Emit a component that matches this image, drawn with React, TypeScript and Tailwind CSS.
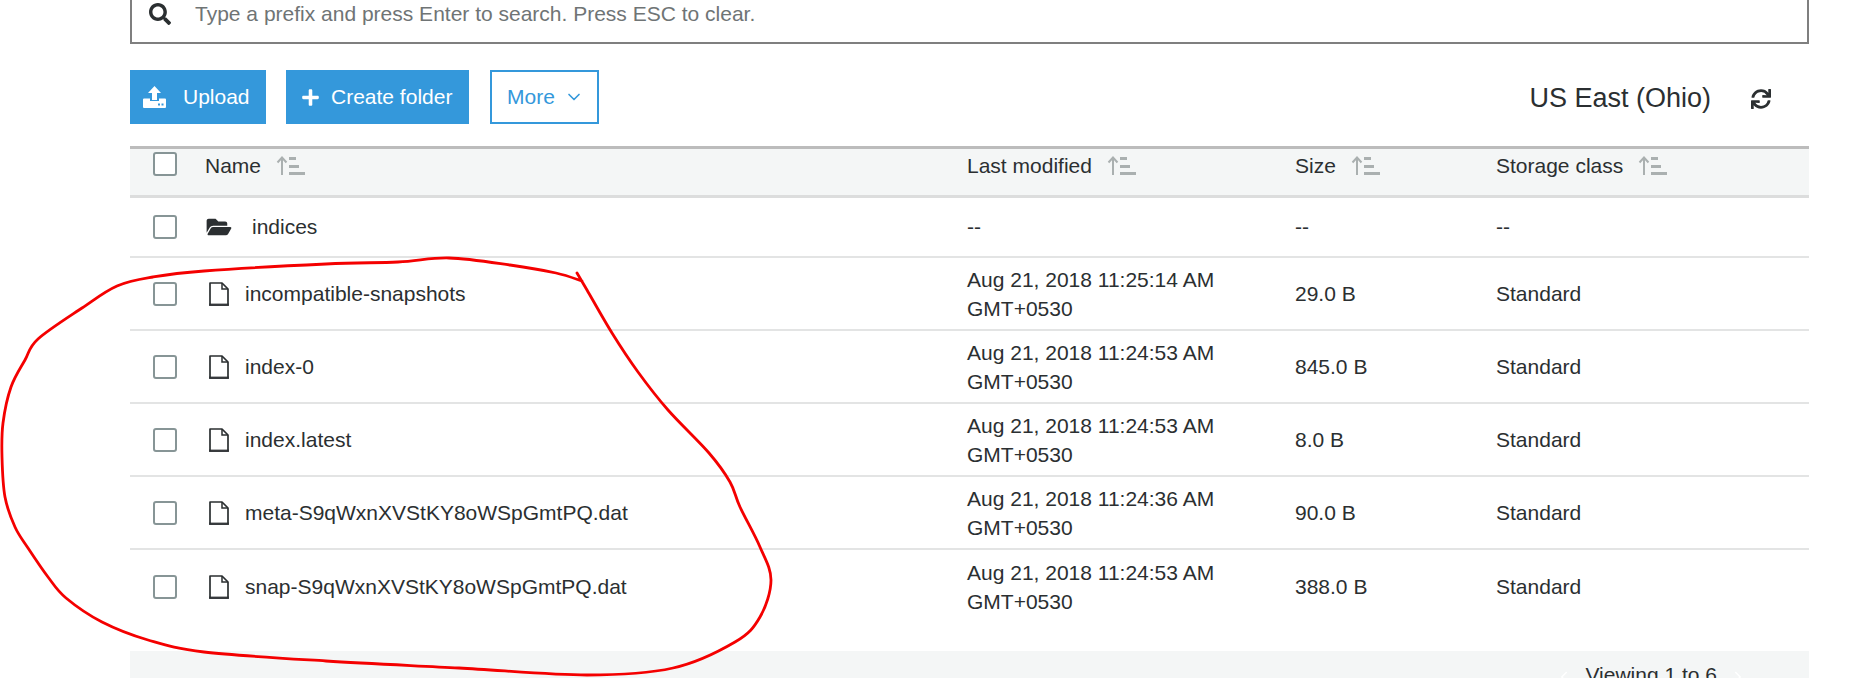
import { ChevronDown, ChevronLeft, ChevronRight } from 'lucide-react';
import { FaFolderOpen, FaPlus, FaSearch, FaSync } from 'react-icons/fa';

const rows = [
  { name: 'incompatible-snapshots', date: 'Aug 21, 2018 11:25:14 AM', size: '29.0 B' },
  { name: 'index-0', date: 'Aug 21, 2018 11:24:53 AM', size: '845.0 B' },
  { name: 'index.latest', date: 'Aug 21, 2018 11:24:53 AM', size: '8.0 B' },
  { name: 'meta-S9qWxnXVStKY8oWSpGmtPQ.dat', date: 'Aug 21, 2018 11:24:36 AM', size: '90.0 B' },
  { name: 'snap-S9qWxnXVStKY8oWSpGmtPQ.dat', date: 'Aug 21, 2018 11:24:53 AM', size: '388.0 B' },
];

// the hand-drawn circle, traced from the screenshot
const scribble: [number, number][] = [
  [582, 281], [556, 273], [510, 265], [449, 258], [398, 262], [326, 264], [204, 271], [153, 277], [117, 286],
  [82, 308], [38, 339], [25, 360], [11, 387], [3, 423], [2, 457], [5, 497], [15, 527], [28, 548], [48, 577],
  [66, 598], [102, 622], [148, 640], [204, 652], [326, 661], [459, 668], [587, 675], [673, 668], [735, 642],
  [760, 617], [771, 580], [760, 547], [740, 507], [730, 482], [709, 453], [668, 410], [638, 372], [612, 333],
  [587, 290], [577, 273],
];

const smoothPath = (pts: [number, number][]) => {
  let d = `M${pts[0][0]} ${pts[0][1]}`;
  for (let i = 0; i < pts.length - 1; i++) {
    const p0 = pts[Math.max(i - 1, 0)];
    const p1 = pts[i];
    const p2 = pts[i + 1];
    const p3 = pts[Math.min(i + 2, pts.length - 1)];
    const c1x = p1[0] + (p2[0] - p0[0]) / 6;
    const c1y = p1[1] + (p2[1] - p0[1]) / 6;
    const c2x = p2[0] - (p3[0] - p1[0]) / 6;
    const c2y = p2[1] - (p3[1] - p1[1]) / 6;
    d += ` C${c1x} ${c1y} ${c2x} ${c2y} ${p2[0]} ${p2[1]}`;
  }
  return d;
};

const Checkbox = () => <div className="w-6 h-6 ml-[23px] bg-white border-2 border-[#879596] rounded-[3px]" />;

const SortIcon = () => (
  <svg width="30" height="20" viewBox="0 0 30 20" className="text-[#aab0b0] shrink-0">
    <path d="M6 19V2M1.5 6.5 6 1.5l4.5 5" fill="none" stroke="currentColor" strokeWidth="2" />
    <path d="M13 1h7v3h-7zM13 9h10v3H13zM13 16h16v3H13z" fill="currentColor" />
  </svg>
);

const UploadIcon = () => (
  <svg width="23" height="22" viewBox="0 0 23 22" fill="white" className="shrink-0">
    <path d="M11.5 0 18 7h-4v7H9V7H5z" />
    <path d="M1 12.5h6V15h9v-2.5h6a1 1 0 0 1 1 1V21a1 1 0 0 1-1 1H1a1 1 0 0 1-1-1v-7.5a1 1 0 0 1 1-1z" />
    <rect x="15" y="17.5" width="2" height="2" fill="#3498db" />
    <rect x="18.5" y="17.5" width="2" height="2" fill="#3498db" />
  </svg>
);

const FileIcon = () => (
  <svg width="20" height="24" viewBox="0 0 20 24" className="ml-[4px] shrink-0 text-[#2b2f31]">
    <path d="M1 1h12l6 6v16H1z" fill="none" stroke="currentColor" strokeWidth="1.7" strokeLinejoin="round" />
    <path d="M13 1v6h6" fill="none" stroke="currentColor" strokeWidth="1.5" />
    <path d="M0 21.5h20V24H0z" fill="currentColor" opacity="0.75" />
  </svg>
);

const Head = ({ label }: { label: string }) => (
  <div className="flex items-center gap-[15px] h-[28px]">
    <span>{label}</span>
    <SortIcon />
  </div>
);

export default function App() {
  return (
    <div className="relative w-[1872px] h-[678px] overflow-hidden bg-white pl-[130px] pr-[63px] text-[21px] text-[#2b2f31] font-['Liberation_Sans',Arial,sans-serif]">
      <div className="flex items-center h-[44px] border-2 border-t-0 border-[#7f7f7f] text-[#6f7475]">
        <FaSearch className="ml-[17px] mb-[14px] w-[22px] h-[22px] text-[#2b2f31]" />
        <span className="ml-[24px] mb-[14px]">Type a prefix and press Enter to search. Press ESC to clear.</span>
      </div>

      <div className="flex items-center h-[54px] mt-[26px]">
        <button className="flex items-center h-full w-[136px] pl-[13px] gap-[17px] bg-[#3498db] text-white">
          <UploadIcon />
          Upload
        </button>
        <button className="flex items-center h-full w-[183px] ml-5 pl-[15px] gap-[11px] bg-[#3498db] text-white">
          <FaPlus className="w-[19px] h-[19px]" />
          Create folder
        </button>
        <button className="flex items-center h-full w-[109px] ml-[21px] pl-[15px] gap-[9px] border-2 border-[#3498db] bg-white text-[#3498db]">
          More
          <ChevronDown className="w-[20px] h-[20px]" />
        </button>
        <span className="ml-auto mt-[3px] text-[27px] text-[#2b2f31]">US East (Ohio)</span>
        <FaSync className="w-[20px] h-[20px] mt-[3px] ml-[40px] mr-[38px] text-[#2b2f31]" />
      </div>

      <div className="grid grid-cols-[75px_762px_328px_201px_1fr] h-[52px] mt-[22px] pt-[3px] bg-[#f4f6f6] border-t-[3px] border-b-[3px] border-t-[#bcbcbc] border-b-[#dcdddd]">
        <Checkbox />
        <Head label="Name" />
        <Head label="Last modified" />
        <Head label="Size" />
        <Head label="Storage class" />
      </div>

      <div className="grid grid-cols-[75px_762px_328px_201px_1fr] items-center h-[60px] border-b-2 border-[#e3e4e4]">
        <Checkbox />
        <div className="flex items-center gap-[20px]">
          <FaFolderOpen className="w-[26px] h-[22px] text-[#2b2f31] ml-[1px]" />
          indices
        </div>
        <span>--</span>
        <span>--</span>
        <span>--</span>
      </div>

      {rows.map((r, i) => (
        <div
          key={r.name}
          className={i < rows.length - 1
            ? 'grid grid-cols-[75px_762px_328px_201px_1fr] items-center h-[73px] border-b-2 border-[#e3e4e4]'
            : 'grid grid-cols-[75px_762px_328px_201px_1fr] items-center h-[73px]'}
        >
          <Checkbox />
          <div className="flex items-center gap-[16px]">
            <FileIcon />
            {r.name}
          </div>
          <div className="leading-[29px]">
            {r.date}
            <br />
            GMT+0530
          </div>
          <span>{r.size}</span>
          <span>Standard</span>
        </div>
      ))}

      <div className="flex items-start justify-end h-[27px] mt-[28px] bg-[#f4f6f6] pt-[11px] pr-[62px]">
        <ChevronLeft className="w-[18px] h-[18px] mt-[6px] mr-[12px] text-white" />
        <span className="leading-[26px] h-[16px]">Viewing 1 to 6</span>
        <ChevronRight className="w-[18px] h-[18px] mt-[6px] ml-[12px] text-white" />
      </div>

      <svg width="1872" height="678" className="absolute inset-0 pointer-events-none">
        <path d={smoothPath(scribble)} fill="none" stroke="#f40000" strokeWidth="2.8" strokeLinecap="round" strokeLinejoin="round" />
      </svg>
    </div>
  );
}
